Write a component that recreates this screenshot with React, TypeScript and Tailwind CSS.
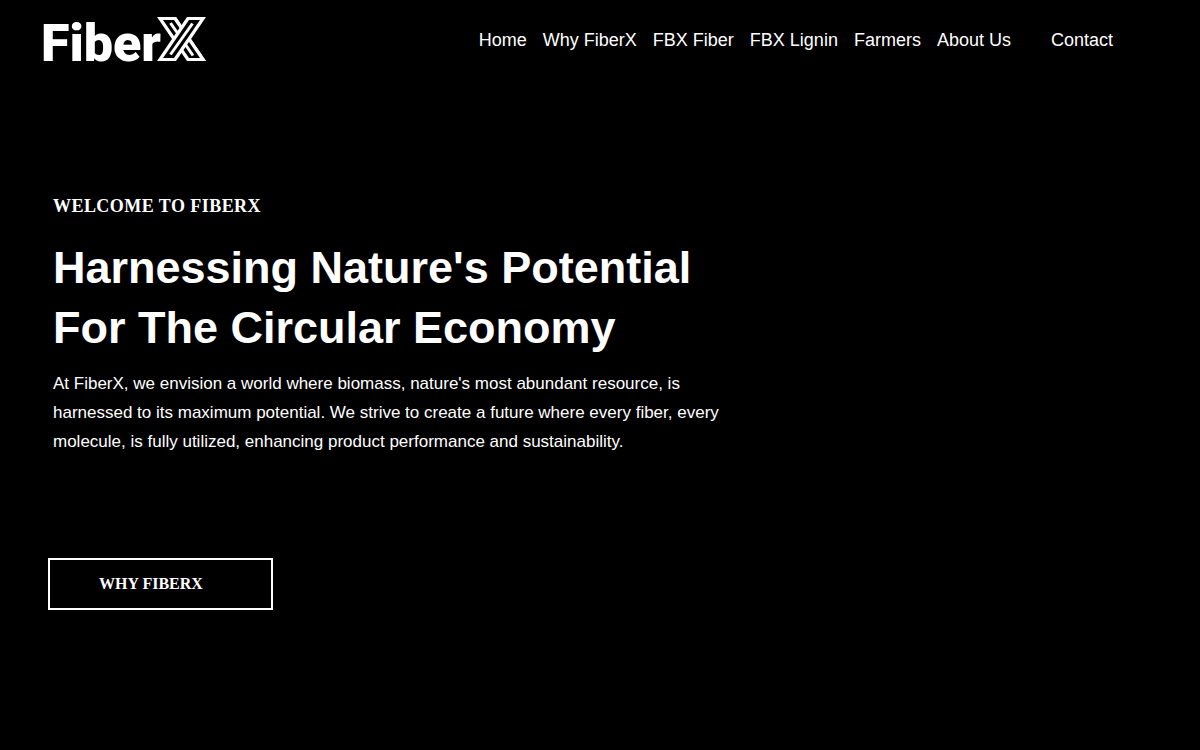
const links = [
  { label: 'Home', href: '#home' },
  { label: 'Why FiberX', href: '#why' },
  { label: 'FBX Fiber', href: '#fiber' },
  { label: 'FBX Lignin', href: '#lignin' },
  { label: 'Farmers', href: '#farmers' },
  { label: 'About Us', href: '#about' },
];

function Logo() {
  return (
    <a href="#home" aria-label="FiberX home" className="flex items-baseline pt-2">
      <span className="font-[Roboto,sans-serif] text-[52px] leading-[60px] font-black">Fiber</span>
      <svg width="49" height="44" viewBox="0 0 49 44" className="-ml-1 shrink-0" aria-hidden="true">
        <path d="M0 0H19L49 44H30Z" fill="#fff" />
        <path d="M6 3H17L43 41H32Z" fill="#000" />
        <path d="M13.500 6L36 38.500" stroke="#fff" strokeWidth="3" />
        <path d="M16 0H19L49 44H46Z" fill="#fff" />
        <path d="M49 0H30L0 44H19Z" fill="#fff" />
        <path d="M43 3H32L6 41H17Z" fill="#000" />
        <path d="M35.500 6.500L13.500 37.500" stroke="#fff" strokeWidth="3" />
      </svg>
    </a>
  );
}

export default function App() {
  return (
    <div className="min-h-screen bg-black font-['Liberation_Sans',Arial,sans-serif] text-white">
      <header className="flex h-20 items-center justify-between pr-[87px] pl-[41px]">
        <Logo />
        <nav aria-label="Main" className="flex items-center gap-10 text-lg">
          <div className="flex gap-4">
            {links.map((link) => (
              <a key={link.label} href={link.href}>{link.label}</a>
            ))}
          </div>
          <a href="#contact">Contact</a>
        </nav>
      </header>
      <main id="home" className="px-12 pt-28">
        <div className="max-w-[700px] pl-[5px]">
          <p className="font-['Liberation_Serif',serif] text-lg font-bold tracking-wide">WELCOME TO FIBERX</p>
          <h1 className="mt-[18px] text-[45px] leading-[60px] font-bold">
            Harnessing Nature's Potential For The Circular Economy
          </h1>
          <p className="mt-[11px] text-[17px] leading-[29px]">
            At FiberX, we envision a world where biomass, nature's most abundant resource, is harnessed to its maximum potential. We strive to create a future where every fiber, every molecule, is fully utilized, enhancing product performance and sustainability.
          </p>
        </div>
        <a
          href="#why"
          className="mt-[102px] inline-flex h-[52px] w-[225px] items-center border-2 border-white pl-[49px] font-['Liberation_Serif',serif] font-bold"
        >
          WHY FIBERX
        </a>
      </main>
    </div>
  );
}
